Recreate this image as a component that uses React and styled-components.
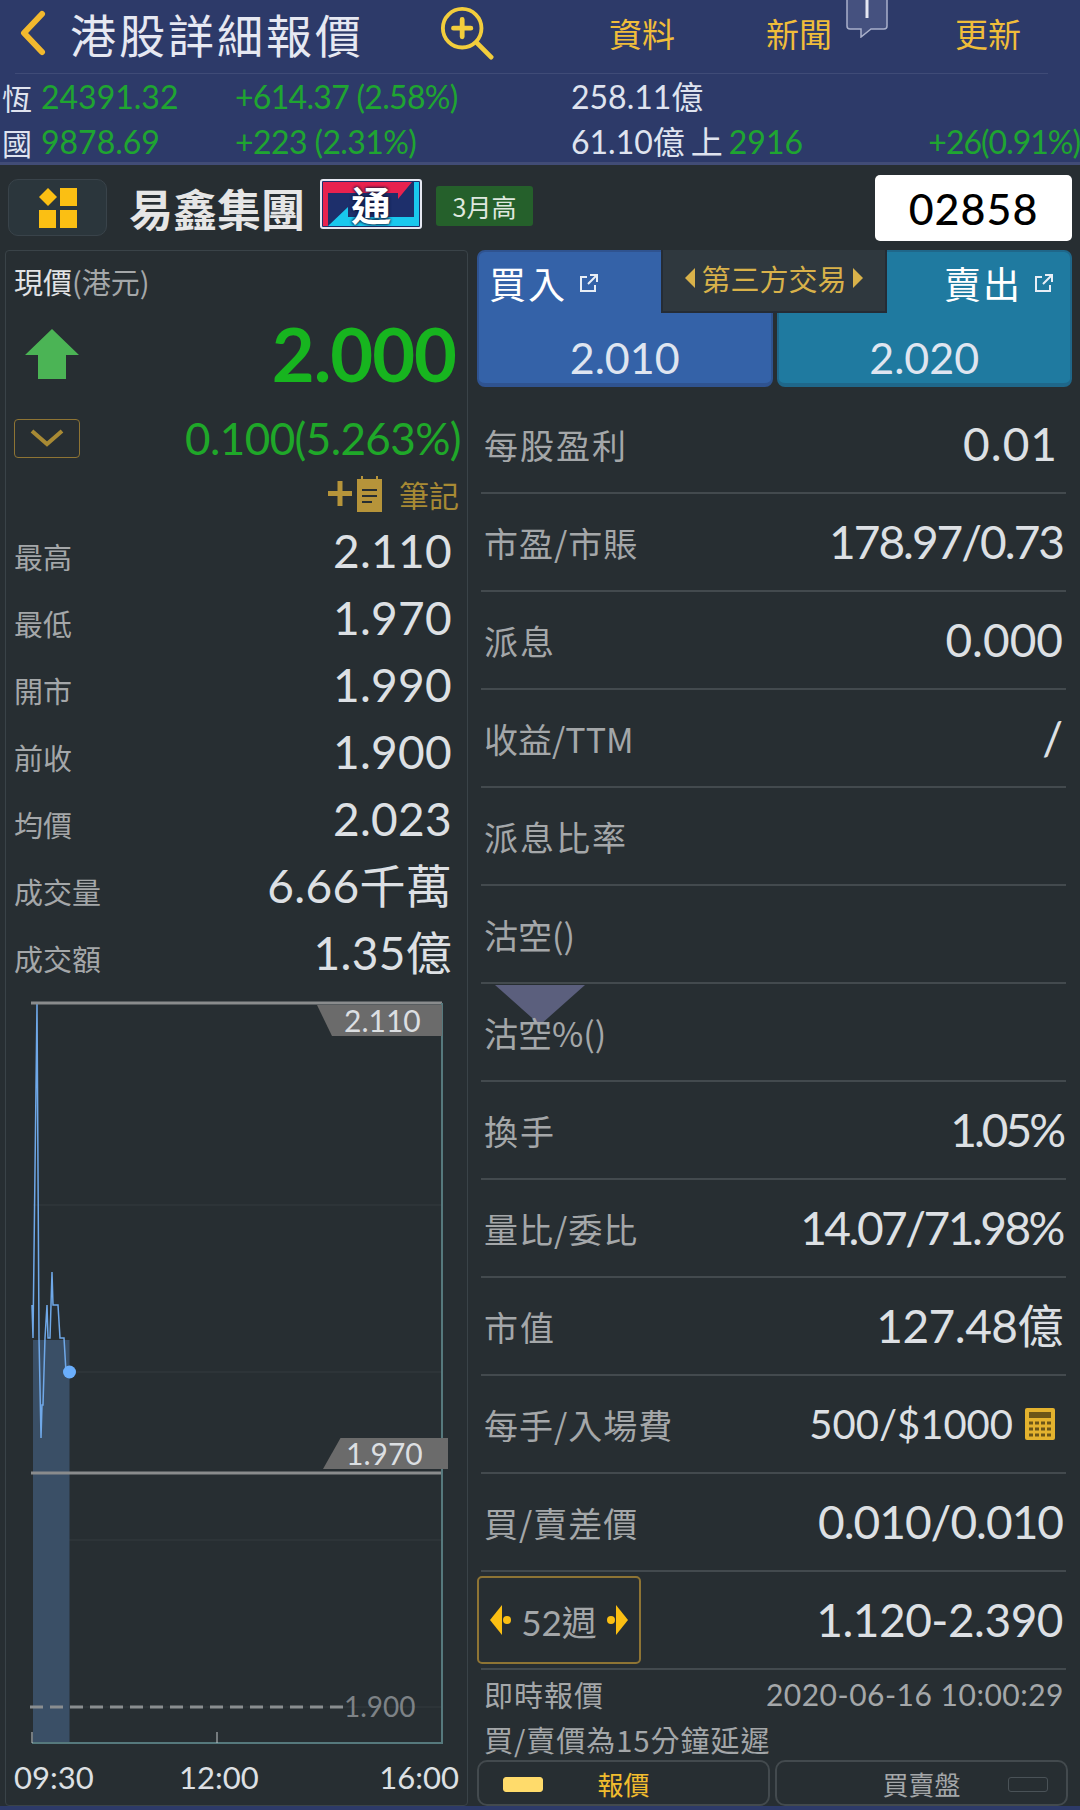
import React from "react";
import styled, { createGlobalStyle } from "styled-components";

const CJK = `"Noto Sans CJK TC", sans-serif`;
const NUM = `Lato, "Noto Sans CJK TC", sans-serif`;

const GlobalStyles = createGlobalStyle`
  html, body, #root {
    margin: 0;
    padding: 0;
    width: 1080px;
    height: 1810px;
    overflow: hidden;
    background: #272e32;
  }
  * { box-sizing: border-box; }
`;

const Page = styled.div`
  width: 1080px;
  height: 1810px;
  display: flex;
  flex-direction: column;
  font-family: ${CJK};
  background: #272e32;
  border-bottom: 4px solid #2d3a69;
`;

// top blue bar
const TopBar = styled.div`
  background: #2d3a69;
  border-bottom: 3px solid #414c76;
  height: 165px;
  overflow: hidden;
`;

const TitleRow = styled.div`
  height: 74px;
  margin: 0 32px 0 15px;
  padding-bottom: 7px;
  display: flex;
  align-items: center;
  border-bottom: 1px solid #3f4b77;
`;

const BackIcon = styled.svg`
  width: 28px;
  height: 48px;
  margin-left: 4px;
  flex: none;
`;

const Title = styled.div`
  margin-left: 23px;
  width: 370px;
  font-size: 46px;
  letter-spacing: 3px;
  color: #e6e8f2;
  line-height: 1;
`;

const ZoomIcon = styled.svg`
  width: 54px;
  height: 54px;
  flex: none;
`;

const Nav = styled.div`
  position: relative;
  font-size: 33px;
  line-height: 1;
  color: #f0bd3a;
  margin-left: ${(p) => p.$left}px;
`;

const BubbleIcon = styled.svg`
  position: absolute;
  left: 80px;
  top: -19px;
  width: 42px;
  height: 40px;
`;

const IndexRow = styled.div`
  display: grid;
  grid-template-columns: 41px 194px 336px 1fr;
  align-items: center;
  height: 45px;
  white-space: nowrap;
  font-family: ${NUM};
  font-size: 32px;
  line-height: 1;
`;

const IndexName = styled.span`
  font-family: ${CJK};
  font-size: 30px;
  color: #dfe3ef;
  padding-left: 2px;
`;

const Up = styled.span`
  color: #1fa531;
  letter-spacing: ${(p) => p.$ls || 0}px;
`;

const Plain = styled.span`
  color: #dfe3ef;
`;

const TurnoverCell = styled.div`
  display: flex;
  align-items: center;
  gap: 6px;
`;

const PushRight = styled(Up)`
  margin-left: auto;
`;

// stock name row
const StockRow = styled.div`
  height: 85px;
  display: flex;
  align-items: center;
  padding-left: 8px;
`;

const MenuButton = styled.div`
  width: 99px;
  height: 57px;
  border: 1px solid #39434a;
  border-radius: 10px;
  background: #2b363c;
  display: flex;
  align-items: center;
  justify-content: center;
  flex: none;
`;

const StockName = styled.div`
  margin-left: 22px;
  width: 191px;
  font-size: 44px;
  font-weight: 700;
  color: #e6e6e6;
  line-height: 1;
  white-space: nowrap;
`;

const Badge = styled.div`
  position: relative;
  width: 102px;
  height: 50px;
  margin-top: -8px;
  flex: none;
  display: flex;
  align-items: center;
  justify-content: center;
  font-size: 40px;
  font-weight: 700;
  color: #fff;
  line-height: 1;
`;

const BadgeBack = styled.svg`
  position: absolute;
  inset: 0;
  width: 100%;
  height: 100%;
`;

const BadgeText = styled.span`
  position: relative;
  text-shadow: 0 0 3px #0c1538, 0 0 3px #0c1538;
`;

const HighTag = styled.div`
  margin-left: 14px;
  width: 97px;
  height: 40px;
  margin-top: -4px;
  background: #25602b;
  border-radius: 3px;
  display: flex;
  align-items: center;
  justify-content: center;
  font-size: 25px;
  color: #dfe8df;
`;

const CodeBox = styled.div`
  margin-left: auto;
  margin-right: 8px;
  margin-top: 1px;
  width: 197px;
  height: 66px;
  background: #fff;
  border-radius: 5px;
  display: flex;
  align-items: center;
  justify-content: center;
  font-family: ${NUM};
  font-size: 43px;
  font-weight: 500;
  letter-spacing: 1px;
  color: #000;
`;

const Columns = styled.div`
  flex: 1;
  display: flex;
  align-items: stretch;
  padding: 0 8px 0 5px;
  gap: 9px;
  min-height: 0;
`;

const LeftPanel = styled.div`
  width: 463px;
  flex: none;
  border: 1px solid #3a4348;
  border-radius: 4px;
  padding: 0 8px;
  display: flex;
  flex-direction: column;
`;

const PriceCaption = styled.div`
  height: 59px;
  display: flex;
  align-items: center;
  font-size: 29px;
  color: #e2e4e6;
  span { color: #a4a7a9; }
`;

const PriceRow = styled.div`
  height: 88px;
  display: flex;
  align-items: center;
  justify-content: space-between;
  padding: 0 3px 0 11px;
`;

const BigPrice = styled.div`
  font-family: ${NUM};
  font-weight: 700;
  font-size: 74px;
  letter-spacing: -1px;
  color: #17b51f;
  line-height: 1;
`;

const ChangeRow = styled.div`
  height: 50px;
  margin-top: 15px;
  display: flex;
  align-items: center;
  justify-content: space-between;
`;

const FoldButton = styled.div`
  width: 66px;
  height: 39px;
  border: 1px solid #8e7434;
  border-radius: 4px;
  display: flex;
  align-items: center;
  justify-content: center;
`;

const ChangeText = styled.div`
  font-family: ${NUM};
  font-size: 44px;
  color: #1fa829;
  line-height: 1;
  letter-spacing: -0.6px;
  margin-right: -2px;
`;

const NoteRow = styled.div`
  height: 42px;
  margin-top: 10px;
  display: flex;
  align-items: center;
  justify-content: flex-end;
  gap: 17px;
  font-size: 30px;
  color: #a88a34;
`;

const StatList = styled.div`
  margin-top: 2px;
  flex: none;
`;

const StatRow = styled.div`
  height: 67px;
  display: flex;
  align-items: center;
  justify-content: space-between;
  padding-right: 7px;
`;

const StatLabel = styled.div`
  font-size: 29px;
  color: #a4a7a9;
  padding-top: 10px;
`;

const StatValue = styled.div`
  font-family: ${NUM};
  font-size: 46px;
  color: #dde0e4;
  line-height: 1;
  letter-spacing: 0.3px;
`;

const ChartBox = styled.div`
  position: relative;
  height: 747px;
  flex: none;
  margin: 14px -8px 0;
`;

const ChartSvg = styled.svg`
  display: block;
  width: 100%;
  height: 100%;
`;

const ChartTag = styled.div`
  position: absolute;
  top: ${(p) => p.$top}px;
  left: ${(p) => p.$left}px;
  width: 125px;
  height: 31px;
  background: #6b6b6b;
  clip-path: ${(p) => p.$clip};
  font-family: ${NUM};
  font-size: 30px;
  line-height: 31px;
  color: #dcdfe2;
  padding-left: ${(p) => p.$pad}px;
`;

const BaseLabel = styled.div`
  position: absolute;
  top: 692px;
  left: 338px;
  font-family: ${NUM};
  font-size: 28px;
  line-height: 1;
  color: #7d8286;
`;

const TimeAxis = styled.div`
  display: grid;
  grid-template-columns: 165px 78px 1fr;
  margin-top: 12px;
  font-family: ${NUM};
  font-size: 31px;
  color: #dde0e4;
  line-height: 1.2;
`;

const TimeCell = styled.div`
  text-align: ${(p) => p.$align || "left"};
`;

// right column
const RightPanel = styled.div`
  flex: 1;
  min-width: 0;
  display: flex;
  flex-direction: column;
`;

const Trade = styled.div`
  position: relative;
  display: flex;
  gap: 4px;
  height: 137px;
  flex: none;
`;

const TradeCard = styled.div`
  flex: 1;
  padding: 9px 16px 0 10px;
  border-radius: 8px;
  background: ${(p) => p.$bg};
  border: 2px solid ${(p) => p.$edge};
  border-bottom-width: 4px;
  display: flex;
  flex-direction: column;
  color: #fff;
`;

const TradeHead = styled.div`
  display: flex;
  align-items: center;
  justify-content: ${(p) => (p.$end ? "flex-end" : "flex-start")};
  gap: 12px;
  font-size: 37px;
  line-height: 1.2;
  letter-spacing: 2px;
`;

const ExternalIcon = styled.svg`
  width: 20px;
  height: 20px;
  flex: none;
`;

const TradePrice = styled.div`
  margin-top: 31px;
  margin-left: 6px;
  text-align: center;
  font-family: ${NUM};
  font-size: 43px;
  line-height: 1;
  color: #dfe5f0;
`;

const ThirdParty = styled.div`
  position: absolute;
  top: 0;
  left: 184px;
  width: 226px;
  height: 63px;
  background: #2f383e;
  border: 2px solid #252c35;
  border-top: none;
  display: flex;
  align-items: center;
  justify-content: center;
  gap: 6px;
  font-size: 29px;
  color: #d9b24a;
  padding-bottom: 6px;
`;

const Caret = styled.i`
  width: 0;
  height: 0;
  border-top: 10px solid transparent;
  border-bottom: 10px solid transparent;
  ${(p) => (p.$dir === "left" ? "border-right: 10px solid #d9b24a;" : "border-left: 10px solid #d9b24a;")}
`;

const InfoList = styled.div`
  margin-top: 9px;
  flex: none;
`;

const InfoRow = styled.div`
  position: relative;
  height: 98px;
  margin: 0 6px 0 4px;
  display: flex;
  align-items: center;
  justify-content: space-between;
  padding: 0 3px 0 3px;
  border-bottom: 2px solid #434a4e;
`;

const InfoLabel = styled.div`
  position: relative;
  font-size: 34px;
  color: #a4a7a9;
  letter-spacing: ${(p) => p.$ls ?? 2}px;
  white-space: nowrap;
`;

const InfoValue = styled.div`
  display: flex;
  align-items: center;
  gap: 12px;
  font-family: ${NUM};
  font-size: ${(p) => p.$size || 46}px;
  line-height: 1;
  color: #dde0e4;
  letter-spacing: ${(p) => p.$ls || 0}px;
  padding-right: ${(p) => p.$pad || 0}px;
`;

const Pointer = styled.div`
  position: absolute;
  top: 1px;
  left: 14px;
  width: 90px;
  height: 40px;
  background: #5b5f7d;
  clip-path: polygon(0 0, 100% 0, 50% 100%);
`;

const RangeButton = styled.div`
  width: 164px;
  height: 88px;
  margin-left: -7px;
  border: 2px solid #8e7434;
  border-radius: 5px;
  display: flex;
  align-items: center;
  justify-content: center;
  gap: 9px;
  font-size: 35px;
  color: #a4a7a9;
  font-family: ${NUM};
  white-space: nowrap;
`;

const RangeArrow = styled.svg`
  width: 22px;
  height: 30px;
  flex: none;
`;

const FootRow = styled.div`
  height: 42px;
  margin: 3px 8px 0 7px;
  display: flex;
  align-items: center;
  justify-content: space-between;
  font-size: 29px;
  letter-spacing: 1px;
  color: #a4a7a9;
  white-space: nowrap;
`;

const FootTime = styled.span`
  font-family: ${NUM};
  font-size: 30px;
  letter-spacing: 0.5px;
`;

const Tabs = styled.div`
  margin-top: auto;
  display: flex;
  gap: 5px;
  height: 47px;
  padding-right: 4px;
`;

const Tab = styled.div`
  flex: 1;
  position: relative;
  border: 2px solid #434a4e;
  border-radius: 10px;
  display: flex;
  align-items: center;
  justify-content: center;
  font-size: 26px;
  color: ${(p) => (p.$on ? "#f2bd2e" : "#a4a7a9")};
`;

const TabMark = styled.i`
  position: absolute;
  top: 15px;
  ${(p) => (p.$on ? "left: 24px;" : "right: 18px;")}
  width: 40px;
  height: 15px;
  border-radius: 3px;
  background: ${(p) => (p.$on ? "#ffdb6b" : "transparent")};
  border: 1px solid ${(p) => (p.$on ? "#ffdb6b" : "#4a5257")};
`;

const External = () => (
  <ExternalIcon viewBox="0 0 20 20" fill="none" stroke="#e8eef6" strokeWidth="2">
    <path d="M8 4H2v14h14v-6M9 11 18 2M11 2h7v7" />
  </ExternalIcon>
);

const trace =
  "32,1305 33,1338 37,1003 39,1338 41,1438 42,1405 43,1405 45,1338 47,1305 48,1338 50,1338 52,1272 53,1305 58,1305 60,1338 64,1338 66,1372 69,1372";

const Chart = () => (
  <ChartBox>
    {/* viewBox follows page pixels so the trace reads against the reference */}
    <ChartSvg viewBox="6 1000 461 747">
      <path d="M33 1205H442M33 1372H442M33 1540H442" stroke="#343b3f" strokeWidth="1" />
      <path d="M33 1707H442" stroke="#343b3f" strokeWidth="1" />
      <rect x="33" y="1340" width="36.5" height="403" fill="#3a4f66" />
      <polyline points={trace} fill="none" stroke="#6fa8e8" strokeWidth="1.5" />
      <path d="M31 1003H442M31 1473H442" stroke="#8a8c8d" strokeWidth="3" />
      <path d="M442 1003V1743H32" fill="none" stroke="#56797d" strokeWidth="2" />
      <path d="M30 1707H344" stroke="#8a8e90" strokeWidth="3" strokeDasharray="13 7" />
      <path d="M32 1732V1743M217 1732V1743" stroke="#c4c8ca" strokeWidth="1" />
      <circle cx="69.5" cy="1372" r="6.5" fill="#6aaefc" />
    </ChartSvg>
    <ChartTag $top={5} $left={311} $pad={27} $clip="polygon(0 0, 100% 0, 100% 100%, 12% 100%)">2.110</ChartTag>
    <ChartTag $top={438} $left={317} $pad={23} $clip="polygon(14% 0, 100% 0, 100% 100%, 0 100%)">1.970</ChartTag>
    <BaseLabel>1.900</BaseLabel>
  </ChartBox>
);

const stats = [
  ["最高", "2.110"],
  ["最低", "1.970"],
  ["開市", "1.990"],
  ["前收", "1.900"],
  ["均價", "2.023"],
  ["成交量", "6.66千萬"],
  ["成交額", "1.35億"],
];

// ls squeezes the Lato digits to the width the reference's narrow font takes
const infos = [
  { label: "每股盈利", value: "0.01", ls: 1, pad: 5 },
  { label: "市盈/市賬", labelLs: 1, value: "178.97/0.73", ls: -2 },
  { label: "派息", value: "0.000" },
  { label: "收益/TTM", labelLs: 0, value: "/" },
  { label: "派息比率", value: "" },
  { label: "沽空()", labelLs: 0, value: "" },
  { label: "沽空%()", labelLs: 0, value: "", pointer: true },
  { label: "換手", value: "1.05%", ls: -3 },
  { label: "量比/委比", labelLs: 1, value: "14.07/71.98%", ls: -2.5 },
  { label: "市值", value: "127.48億", ls: -0.5 },
];

const App = () => (
  <Page>
    <GlobalStyles />
    <TopBar>
      <TitleRow>
        <BackIcon viewBox="0 0 28 48" fill="none" stroke="#f2b92e" strokeWidth="6" strokeLinecap="round" strokeLinejoin="round">
          <path d="M23 5 5 24l18 19" />
        </BackIcon>
        <Title>港股詳細報價</Title>
        <ZoomIcon viewBox="0 0 56 56" fill="none" stroke="#f2cd3c" strokeWidth="4" strokeLinecap="round">
          <circle cx="23" cy="23" r="20" />
          <path d="M23 14v18M14 23h18" strokeWidth="5" />
          <path d="M38 38l15 15" strokeWidth="5" />
        </ZoomIcon>
        <Nav $left={115}>資料</Nav>
        <Nav $left={91}>
          新聞
          <BubbleIcon viewBox="0 0 42 40" fill="#45517f" stroke="#a9b0cb" strokeWidth="1.5">
            <path d="M1-4v32a3 3 0 0 0 3 3h11v8l10-8h13a3 3 0 0 0 3-3V-4z" />
            <path d="M21 0v20" stroke="#e6e8f2" strokeWidth="3" />
          </BubbleIcon>
        </Nav>
        <Nav $left={123}>更新</Nav>
      </TitleRow>
      <IndexRow>
        <IndexName>恆</IndexName>
        <Up>24391.32</Up>
        <Up $ls={-0.7}>+614.37 (2.58%)</Up>
        <Plain>258.11億</Plain>
      </IndexRow>
      <IndexRow>
        <IndexName>國</IndexName>
        <Up>9878.69</Up>
        <Up $ls={-0.6}>+223 (2.31%)</Up>
        <TurnoverCell>
          <Plain>61.10億</Plain>
          <Plain>上</Plain>
          <Up>2916</Up>
          <PushRight $ls={-1}>+26(0.91%)</PushRight>
        </TurnoverCell>
      </IndexRow>
    </TopBar>

    <StockRow>
      <MenuButton>
        <svg width="38" height="40" viewBox="0 0 38 40" fill="#fbbf13">
          <path d="M9 0 18 9 9 18 0 9z" />
          <rect x="21" y="0" width="17" height="18" />
          <rect x="0" y="22" width="17" height="18" />
          <rect x="21" y="22" width="17" height="18" />
        </svg>
      </MenuButton>
      <StockName>易鑫集團</StockName>
      <Badge>
        <BadgeBack viewBox="0 0 102 50">
          <rect x="1" y="1" width="100" height="48" rx="2" fill="#1d2f6b" stroke="#e6e8f2" strokeWidth="2" />
          <path d="M3 3H92L78 20V14H3z" fill="#e8224f" />
          <path d="M3 3V47H8V3z" fill="#e8224f" />
          <path d="M99 3V47H8L28 28V38H94V3z" fill="#19c8ee" />
        </BadgeBack>
        <BadgeText>通</BadgeText>
      </Badge>
      <HighTag>3月高</HighTag>
      <CodeBox>02858</CodeBox>
    </StockRow>

    <Columns>
      <LeftPanel>
        <PriceCaption>
          現價<span>(港元)</span>
        </PriceCaption>
        <PriceRow>
          <svg width="54" height="50" viewBox="0 0 54 50" fill="#4bb455">
            <path d="M27 0 54 26H41V50H13V26H0z" />
          </svg>
          <BigPrice>2.000</BigPrice>
        </PriceRow>
        <ChangeRow>
          <FoldButton>
            <svg width="34" height="18" viewBox="0 0 34 18" fill="none" stroke="#a88a34" strokeWidth="4">
              <path d="M2 2 17 15 32 2" />
            </svg>
          </FoldButton>
          <ChangeText>0.100(5.263%)</ChangeText>
        </ChangeRow>
        <NoteRow>
          <svg width="54" height="36" viewBox="0 0 54 36" fill="#b6943a">
            <path d="M0 15H24V20H0zM9.500 5H14.500V30H9.500z" />
            <path d="M29 3H54V36H29z" />
            <path d="M34 0V6M49 0V6" stroke="#b6943a" strokeWidth="2" />
            <path d="M34 14H49M34 20H49M34 26H44" stroke="#272e32" strokeWidth="2" />
          </svg>
          筆記
        </NoteRow>
        <StatList>
          {stats.map(([label, value]) => (
            <StatRow key={label}>
              <StatLabel>{label}</StatLabel>
              <StatValue>{value}</StatValue>
            </StatRow>
          ))}
        </StatList>
        <Chart />
        <TimeAxis>
          <TimeCell>09:30</TimeCell>
          <TimeCell $align="center">12:00</TimeCell>
          <TimeCell $align="right">16:00</TimeCell>
        </TimeAxis>
      </LeftPanel>

      <RightPanel>
        <Trade>
          <TradeCard $bg="#3462a8" $edge="#2f5390">
            <TradeHead>
              買入
              <External />
            </TradeHead>
            <TradePrice>2.010</TradePrice>
          </TradeCard>
          <TradeCard $bg="#1f7aa0" $edge="#1f678a">
            <TradeHead $end>
              賣出
              <External />
            </TradeHead>
            <TradePrice>2.020</TradePrice>
          </TradeCard>
          <ThirdParty>
            <Caret $dir="left" />
            第三方交易
            <Caret $dir="right" />
          </ThirdParty>
        </Trade>
        <InfoList>
          {infos.map((row) => (
            <InfoRow key={row.label}>
              {row.pointer && <Pointer />}
              <InfoLabel $ls={row.labelLs}>{row.label}</InfoLabel>
              <InfoValue $ls={row.ls} $pad={row.pad}>{row.value}</InfoValue>
            </InfoRow>
          ))}
          <InfoRow>
            <InfoLabel $ls={1}>每手/入場費</InfoLabel>
            <InfoValue $size={40} $pad={8}>
              500/$1000
              <svg width="30" height="32" viewBox="0 0 30 32">
                <rect width="30" height="32" rx="2" fill="#e3b22e" />
                <rect x="4" y="4" width="22" height="6" fill="#6b5518" />
                <path d="M4 15H26M4 21H26M4 27H26" stroke="#6b5518" strokeWidth="3" strokeDasharray="4 2" />
              </svg>
            </InfoValue>
          </InfoRow>
          <InfoRow>
            <InfoLabel $ls={1}>買/賣差價</InfoLabel>
            <InfoValue $ls={-1}>0.010/0.010</InfoValue>
          </InfoRow>
          <InfoRow>
            <RangeButton>
              <RangeArrow viewBox="0 0 22 30" fill="#fbbf13">
                <path d="M12 0v30L0 15z" />
                <circle cx="17" cy="15" r="4" />
              </RangeArrow>
              52週
              <RangeArrow viewBox="0 0 22 30" fill="#fbbf13">
                <path d="M10 0v30l12-15z" />
                <circle cx="5" cy="15" r="4" />
              </RangeArrow>
            </RangeButton>
            <InfoValue $ls={-0.5}>1.120-2.390</InfoValue>
          </InfoRow>
        </InfoList>
        <FootRow>
          即時報價
          <FootTime>2020-06-16 10:00:29</FootTime>
        </FootRow>
        <FootRow>買/賣價為15分鐘延遲</FootRow>
        <Tabs>
          <Tab $on>
            <TabMark $on />
            報價
          </Tab>
          <Tab>
            買賣盤
            <TabMark />
          </Tab>
        </Tabs>
      </RightPanel>
    </Columns>
  </Page>
);

export default App;
